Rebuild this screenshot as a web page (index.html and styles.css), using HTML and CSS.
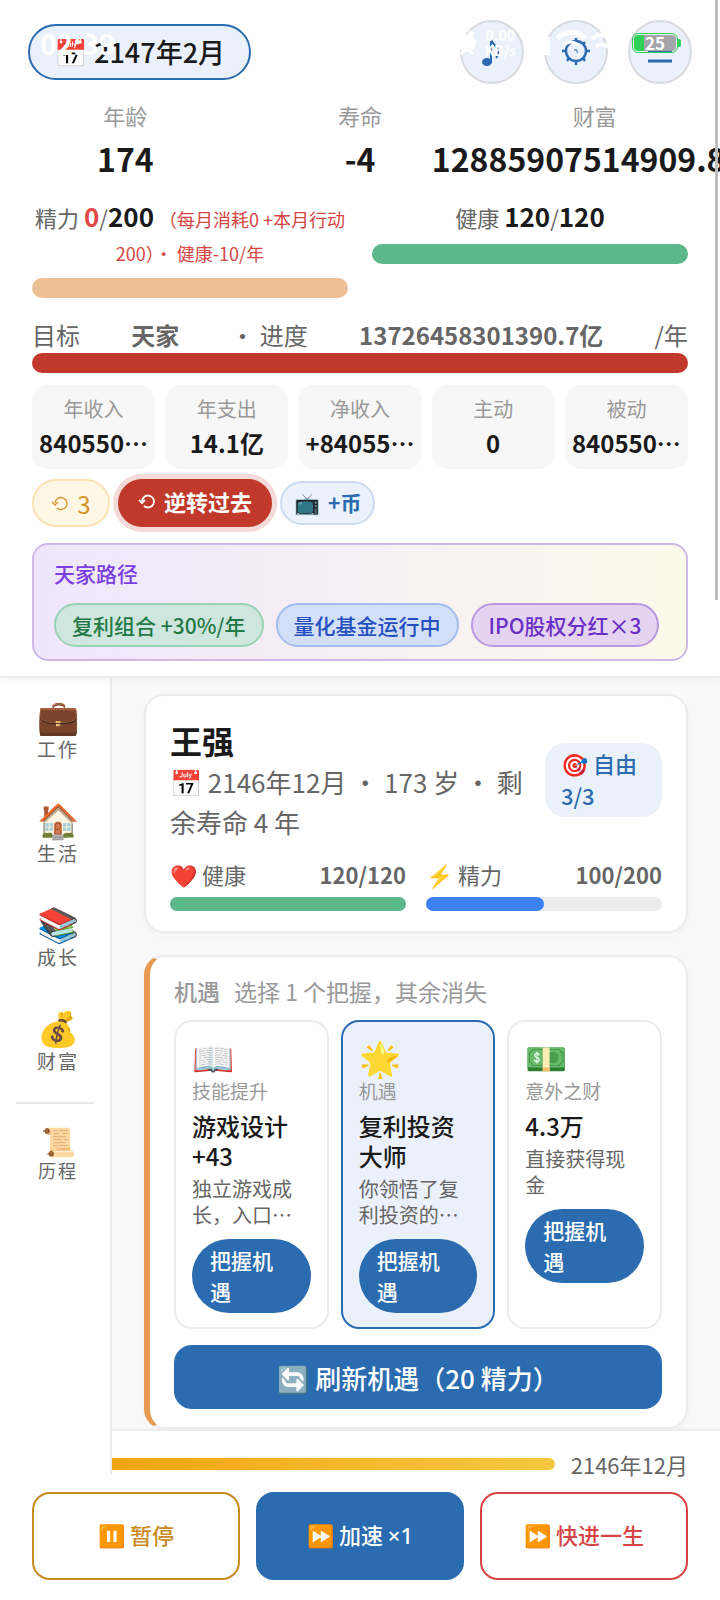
FILE: index.html
```
<!DOCTYPE html>
<html lang="zh-CN">
<head>
    <meta charset="UTF-8">
    <meta name="viewport" content="width=device-width, initial-scale=1.0">
    <title>人生模拟</title>
    <link rel="stylesheet" href="styles.css">
</head>
<body>
    <div class="app">
        <header class="header">
            <div class="top-bar">
                <button class="date-pill"><span class="emoji">📅</span> 2147年2月</button>
                <div class="top-actions">
                    <button class="icon-btn" aria-label="音乐">
                        <svg width="36" height="36" viewBox="0 0 36 36"><path d="M17 6v23" stroke="#2b6cb0" stroke-width="2" fill="none"/><ellipse cx="13" cy="28" rx="5" ry="4" fill="#2b6cb0"/><path d="M17 5c1 6 8 7 7 14c0 2-1 4-2 5" stroke="#2b6cb0" stroke-width="2" fill="none"/></svg>
                    </button>
                    <button class="icon-btn" aria-label="设置">
                        <svg width="36" height="36" viewBox="0 0 36 36" fill="none" stroke="#2b6cb0" stroke-width="2.4"><circle cx="18" cy="17" r="10"/><path d="M18 4v3M18 27v4M4 17h4M28 17h4M9 8l2 2M25 24l2 3M9 27l2-3M25 10l2-2"/><path d="M16 16h3v3" stroke-width="1"/></svg>
                    </button>
                    <button class="icon-btn" aria-label="菜单">
                        <svg width="36" height="36" viewBox="0 0 36 36" stroke="#2b6cb0" stroke-width="3"><path d="M6 7h24M6 17h24M6 27h24"/></svg>
                    </button>
                </div>
            </div>

            <div class="stats">
                <div class="stat"><span class="stat-label">年龄</span><strong class="stat-value">174</strong></div>
                <div class="stat"><span class="stat-label">寿命</span><strong class="stat-value">-4</strong></div>
                <div class="stat"><span class="stat-label">财富</span><strong class="stat-value">12885907514909.8亿</strong></div>
            </div>

            <div class="vitals">
                <div class="vital">
                    <p class="vital-text">精力 <b class="danger">0</b>/<b>200</b> <small>（每月消耗0 +本月行动200）・ 健康-10/年</small></p>
                    <div class="bar bar-energy"></div>
                </div>
                <div class="vital">
                    <p class="vital-text">健康 <b>120</b>/<b>120</b></p>
                    <div class="bar bar-health"></div>
                </div>
            </div>

            <div class="goal">
                <span>目标</span><strong>天家</strong><span>・ 进度</span><strong>13726458301390.7亿</strong><span>/年</span>
            </div>
            <div class="bar bar-goal"></div>

            <div class="money">
                <div class="money-cell"><span>年收入</span><strong>840550…</strong></div>
                <div class="money-cell"><span>年支出</span><strong>14.1亿</strong></div>
                <div class="money-cell"><span>净收入</span><strong>+84055…</strong></div>
                <div class="money-cell"><span>主动</span><strong>0</strong></div>
                <div class="money-cell"><span>被动</span><strong>840550…</strong></div>
            </div>

            <div class="actions">
                <button class="chip chip-coin"><svg class="rewind" viewBox="0 0 18 18"><path d="M4 9a6 6 0 1 1 2 5M1 8l3 3l3-3" fill="none" stroke="currentColor" stroke-width="1.3"/></svg>3</button>
                <button class="chip chip-rewind"><svg class="rewind" viewBox="0 0 18 18"><path d="M4 9a6 6 0 1 1 2 5M1 8l3 3l3-3" fill="none" stroke="currentColor" stroke-width="1.8"/></svg>逆转过去</button>
                <button class="chip chip-ad"><span class="emoji">📺</span>+币</button>
            </div>

            <section class="path">
                <h3>天家路径</h3>
                <div class="tags">
                    <span class="tag tag-green">复利组合 +30%/年</span>
                    <span class="tag tag-blue">量化基金运行中</span>
                    <span class="tag tag-purple">IPO股权分红×3</span>
                </div>
            </section>
        </header>

        <div class="body">
            <nav class="sidebar">
                <button class="nav-item"><span class="emoji">💼</span>工作</button>
                <button class="nav-item"><span class="emoji">🏠</span>生活</button>
                <button class="nav-item"><span class="emoji">📚</span>成长</button>
                <button class="nav-item"><span class="emoji">💰</span>财富</button>
                <hr>
                <button class="nav-item nav-small"><span class="emoji">📜</span>历程</button>
            </nav>

            <main class="content">
                <section class="card">
                    <div class="profile">
                        <div class="profile-info">
                            <h2>王强</h2>
                            <p><span class="emoji">📅</span> 2146年12月 ・ 173 岁 ・ 剩余寿命 4 年</p>
                        </div>
                        <span class="badge"><span class="emoji">🎯</span> 自由 3/3</span>
                    </div>
                    <div class="meters">
                        <div>
                            <div class="meter-head"><span><span class="emoji">❤️</span> 健康</span><strong>120/120</strong></div>
                            <div class="meter"><div class="meter-fill fill-health" style="width: 100%"></div></div>
                        </div>
                        <div>
                            <div class="meter-head"><span><span class="emoji">⚡</span> 精力</span><strong>100/200</strong></div>
                            <div class="meter"><div class="meter-fill fill-energy" style="width: 50%"></div></div>
                        </div>
                    </div>
                </section>

                <section class="card chance">
                    <p class="chance-title"><strong>机遇</strong>选择 1 个把握，其余消失</p>
                    <div class="chance-list">
                        <article class="option">
                            <span class="emoji option-icon">📖</span>
                            <span class="option-type">技能提升</span>
                            <h4>游戏设计+43</h4>
                            <p>独立游戏成长，入口…</p>
                            <button class="take-btn">把握机遇</button>
                        </article>
                        <article class="option selected">
                            <span class="emoji option-icon">🌟</span>
                            <span class="option-type">机遇</span>
                            <h4>复利投资大师</h4>
                            <p>你领悟了复利投资的…</p>
                            <button class="take-btn">把握机遇</button>
                        </article>
                        <article class="option">
                            <span class="emoji option-icon">💵</span>
                            <span class="option-type">意外之财</span>
                            <h4>4.3万</h4>
                            <p>直接获得现金</p>
                            <button class="take-btn">把握机遇</button>
                        </article>
                    </div>
                    <button class="refresh-btn"><span class="emoji">🔄</span> 刷新机遇（20 精力）</button>
                </section>
            </main>
        </div>

        <footer class="footer">
            <div class="timeline">
                <div class="timeline-bar"></div>
                <span>2146年12月</span>
            </div>
            <div class="controls">
                <button class="ctrl ctrl-pause"><span class="emoji">⏸️</span> 暂停</button>
                <button class="ctrl ctrl-speed"><span class="emoji">⏩</span> 加速 <span class="rate">×1</span></button>
                <button class="ctrl ctrl-skip"><span class="emoji">⏩</span> 快进一生</button>
            </div>
        </footer>

        <!-- system status bar, drawn over the page -->
        <div class="status-bar">
            <span class="clock">02:39</span>
            <div class="status-icons">
                <svg width="20" height="28" viewBox="0 0 20 28" fill="#fff"><circle cx="10" cy="14" r="9"/><path d="M2 4l5-3 2 3-5 4zM18 4l-5-3-2 3 5 4zM3 24l3-4h8l3 4-2 2-3-3H8l-3 3z"/></svg>
                <span class="speed">0.00<br>KB/s</span>
                <svg width="28" height="28" viewBox="0 0 28 28" fill="#fff"><path d="M2 20h5v6H2zM10 14h5v12h-5zM20 8h6v18h-6z"/></svg>
                <svg width="34" height="28" viewBox="0 0 34 28" fill="none" stroke="#fff" stroke-width="5"><path d="M3 9Q17-2 31 9"/><path d="M10 16q7-6 14 0" stroke-width="3"/></svg>
                <svg width="24" height="28" viewBox="0 0 24 28" fill="none" stroke="#fff" stroke-width="4"><path d="M2 10Q12 1 22 12M6 18q6-5 12 0"/></svg>
            </div>
            <div class="battery"><span>25</span></div>
        </div>
        <div class="scroll-thumb"></div>
    </div>
</body>
</html>
```

FILE: styles.css
```
* {
    box-sizing: border-box;
}
body {
    margin: 0;
    font-family: "Noto Sans CJK SC", sans-serif;
    color: #1a1a1a;
    background: #fff;
}
h2, h3, h4, p {
    margin: 0;
}
button {
    font-family: inherit;
    color: inherit;
    border: none;
    padding: 0;
    cursor: pointer;
}
.app {
    position: relative;
    display: flex;
    flex-direction: column;
    height: 100vh;
    overflow: hidden;
}

/* header */
.header {
    position: relative;
    z-index: 3;
    background: #fff;
    padding: 20px 32px 15px;
    border-bottom: 2px solid #ececec;
    box-shadow: 0 2px 12px rgba(0, 0, 0, 0.05);
}
.top-bar {
    display: flex;
    justify-content: space-between;
    align-items: center;
    margin: 0 -4px;
    height: 64px;
}
.date-pill {
    height: 56px;
    padding: 0 24px 2px;
    border: 2px solid #2b6cb0;
    border-radius: 28px;
    background: #ebf1fb;
    font-size: 27px;
    font-weight: 500;
}
.top-actions {
    display: flex;
    gap: 20px;
}
.icon-btn {
    display: flex;
    align-items: center;
    justify-content: center;
    width: 64px;
    height: 64px;
    border: 2px solid #d8dadf;
    border-radius: 50%;
    background: #ebf1fb;
}
.stats {
    display: grid;
    grid-template-columns: repeat(3, minmax(0, 1fr));
    margin: 14px -24px 0;
}
.stat {
    display: flex;
    flex-direction: column;
    align-items: center;
    white-space: nowrap;
}
.stat-label {
    font-size: 22px;
    line-height: 34px;
    color: #999;
}
.stat-value {
    font-size: 32px;
    line-height: 52px;
}
.vitals {
    display: grid;
    grid-template-columns: 1fr 1fr;
    gap: 24px;
    align-items: start;
    margin-top: 16px;
}
.vital-text {
    font-size: 22px;
    line-height: 34px;
    text-align: center;
    color: #666;
    margin-bottom: 10px;
}
.vital-text b {
    font-size: 26px;
    line-height: 1;
    color: #1a1a1a;
}
.vital-text .danger {
    color: #e04848;
}
.vital-text small {
    font-size: 18px;
    line-height: 1;
    color: #d64545;
}
.bar {
    height: 20px;
    border-radius: 10px;
}
.bar-energy {
    background: #ecbf94;
}
.bar-health {
    background: #5cb88a;
}
.bar-goal {
    background: #c0392b;
}
.goal {
    display: flex;
    justify-content: space-between;
    margin-top: 19px;
    font-size: 24px;
    line-height: 36px;
    color: #666;
}
.money {
    display: grid;
    grid-template-columns: repeat(5, minmax(0, 1fr));
    gap: 10px;
    margin-top: 12px;
}
.money-cell {
    display: flex;
    flex-direction: column;
    align-items: center;
    height: 84px;
    padding: 8px 4px;
    border-radius: 16px;
    background: #f7f7f7;
    white-space: nowrap;
}
.money-cell span {
    font-size: 20px;
    line-height: 32px;
    color: #999;
}
.money-cell strong {
    font-size: 24px;
    line-height: 36px;
}
.actions {
    display: flex;
    align-items: center;
    gap: 8px;
    margin-top: 10px;
}
.chip {
    display: flex;
    align-items: center;
    justify-content: center;
    gap: 8px;
    height: 48px;
    border-radius: 24px;
    font-size: 22px;
}
.rewind {
    width: 18px;
    height: 18px;
}
.chip-coin {
    width: 78px;
    border: 2px solid #fce2b4;
    background: #fff7e6;
    color: #d4942a;
    font-size: 24px;
}
.chip-rewind {
    padding: 0 20px 4px;
    background: #c0392b;
    color: #fff;
    font-weight: 700;
    box-shadow: 0 0 0 5px #f4dad8;
}
.chip-ad {
    height: 44px;
    padding: 0 12px 2px;
    border: 2px solid #cbdcf0;
    background: #ebf2fb;
    color: #2b6cb0;
    font-size: 21px;
    font-weight: 700;
}
.path {
    margin-top: 16px;
    padding: 12px 20px;
    border: 2px solid #cfb9e8;
    border-radius: 16px;
    background: linear-gradient(90deg, #efe6fd, #fdf9ea);
}
.path h3 {
    font-size: 21px;
    line-height: 32px;
    font-weight: 500;
    color: #7a3fe0;
}
.tags {
    display: flex;
    gap: 12px;
    margin-top: 14px;
}
.tag {
    padding: 0 16px;
    border: 2px solid;
    border-radius: 22px;
    font-size: 21px;
    line-height: 40px;
    font-weight: 500;
    white-space: nowrap;
}
.tag-green {
    color: #1f7a45;
    background: #cfe6de;
    border-color: #98d3b4;
}
.tag-blue {
    color: #2450c0;
    background: #d3dff6;
    border-color: #a3bcee;
}
.tag-purple {
    color: #6a2fc4;
    background: #e4d4f1;
    border-color: #b998e0;
}

/* middle */
.body {
    flex: 1;
    min-height: 0;
    display: flex;
}
.sidebar {
    position: relative;
    z-index: 2;
    width: 112px;
    flex-shrink: 0;
    margin-bottom: -46px;
    padding-top: 16px;
    border-right: 2px solid #ebebeb;
    background: #fff;
}
.nav-item {
    display: flex;
    flex-direction: column;
    align-items: center;
    width: 100%;
    height: 70px;
    padding-left: 6px;
    background: none;
    font-size: 19px;
    line-height: 26px;
    letter-spacing: 2px;
    color: #666;
}
.nav-item + .nav-item {
    margin-top: 34px;
}
.nav-item .emoji {
    font-size: 34px;
    line-height: 42px;
    letter-spacing: 0;
}
.nav-item.nav-small {
    font-size: 18px;
}
.nav-small .emoji {
    font-size: 28px;
    line-height: 34px;
}
.sidebar hr {
    height: 2px;
    margin: 26px 16px 19px;
    border: none;
    background: #e8e8e8;
}
.content {
    flex: 1;
    min-width: 0;
    overflow: hidden;
    padding: 16px 32px 0;
    background: #f9f9f9;
}
.card {
    margin-bottom: 22px;
    padding: 22px 24px 20px;
    border: 2px solid #ececec;
    border-radius: 20px;
    background: #fff;
    box-shadow: 0 2px 6px rgba(0, 0, 0, 0.03);
}
.profile {
    display: flex;
    align-items: center;
    gap: 16px;
}
.profile-info {
    flex: 1;
}
.profile h2 {
    font-size: 32px;
    line-height: 44px;
}
.profile p {
    font-size: 26px;
    line-height: 40px;
    color: #666;
}
.badge {
    width: 117px;
    flex-shrink: 0;
    padding: 4px 16px 6px;
    border-radius: 20px;
    background: #ebf1fb;
    color: #2b6cb0;
    font-size: 22px;
    line-height: 32px;
    font-weight: 500;
}
.meters {
    display: grid;
    grid-template-columns: 1fr 1fr;
    gap: 20px;
    margin-top: 15px;
}
.meter-head {
    display: flex;
    justify-content: space-between;
    font-size: 22px;
    line-height: 34px;
    color: #666;
    margin-bottom: 6px;
}
.meter {
    height: 14px;
    border-radius: 7px;
    background: #ececec;
}
.meter-fill {
    height: 100%;
    border-radius: 7px;
}
.fill-health {
    background: #5cb88a;
}
.fill-energy {
    background: #3b82f6;
}
.chance {
    padding: 18px 24px;
    border-left: 6px solid #e89a50;
}
.chance-title {
    font-size: 23px;
    line-height: 33px;
    color: #999;
}
.chance-title strong {
    margin-right: 14px;
    font-weight: 500;
}
.chance-list {
    display: grid;
    grid-template-columns: repeat(3, minmax(0, 1fr));
    gap: 12px;
    margin-top: 12px;
}
.option {
    display: flex;
    flex-direction: column;
    padding: 15px 16px 14px;
    border: 2px solid #ececec;
    border-radius: 18px;
}
.option.selected {
    border-color: #2b6cb0;
    background: #ebf1fb;
}
.option-icon {
    font-size: 34px;
    line-height: 40px;
}
.option-type {
    font-size: 19px;
    line-height: 28px;
    color: #999;
}
.option h4 {
    margin-top: 6px;
    font-size: 24px;
    line-height: 30px;
    font-weight: 500;
}
.option p {
    margin-top: 5px;
    font-size: 20px;
    line-height: 26px;
    color: #666;
}
.take-btn {
    margin-top: 11px;
    padding: 6px 18px;
    border-radius: 37px;
    background: #2b6cb0;
    color: #fff;
    font-size: 21px;
    line-height: 31px;
    font-weight: 500;
    text-align: left;
}
.refresh-btn {
    width: 100%;
    height: 64px;
    margin-top: 16px;
    border-radius: 18px;
    background: #2b6cb0;
    color: #fff;
    font-size: 26px;
    font-weight: 500;
}

/* footer */
.footer {
    position: relative;
    z-index: 1;
    padding: 16px 32px 20px;
    border-top: 2px solid #ececec;
    background: #fff;
}
.timeline {
    display: flex;
    align-items: center;
    gap: 16px;
    font-size: 22px;
    line-height: 34px;
    color: #666;
}
.timeline-bar {
    flex: 1;
    height: 12px;
    border-radius: 6px;
    background: linear-gradient(90deg, #f59e0b, #f5c842);
}
.controls {
    display: grid;
    grid-template-columns: repeat(3, 1fr);
    gap: 16px;
    margin-top: 11px;
}
.ctrl {
    height: 88px;
    padding-bottom: 4px;
    border: 2px solid;
    border-radius: 18px;
    background: #fff;
    font-size: 22px;
    font-weight: 500;
}
.rate {
    font-family: "Noto Sans", sans-serif;
}
.ctrl-pause {
    color: #c98a22;
}
.ctrl-speed {
    border-color: #2b6cb0;
    background: #2b6cb0;
    color: #fff;
}
.ctrl-skip {
    color: #d64545;
}

/* status bar */
.status-bar {
    position: absolute;
    z-index: 5;
    top: 26px;
    left: 40px;
    right: 40px;
    display: flex;
    align-items: center;
    color: #fff;
    pointer-events: none;
}
.clock {
    margin-right: auto;
    font-size: 28px;
    line-height: 34px;
    font-weight: 700;
}
.status-icons {
    display: flex;
    align-items: center;
    gap: 2px;
    margin-right: 18px;
}
.speed {
    margin: 0 6px;
    font-size: 14px;
    line-height: 15px;
    font-weight: 700;
    text-align: center;
}
.battery {
    position: relative;
    width: 46px;
    height: 20px;
    margin-right: 2px;
    border: 1px solid #2fd158;
    border-radius: 6px;
    background: linear-gradient(90deg, #2fd158 24%, #a3a5a8 24%) content-box #fff;
    padding: 1px;
    font-size: 17px;
    line-height: 16px;
    font-weight: 700;
    text-align: center;
}
.battery::after {
    content: "";
    position: absolute;
    right: -4px;
    top: 5px;
    width: 3px;
    height: 8px;
    border-radius: 0 2px 2px 0;
    background: #2fd158;
}
.scroll-thumb {
    position: absolute;
    z-index: 5;
    top: 0;
    right: 2px;
    width: 3px;
    height: 600px;
    background: #bdbdbd;
}
```
